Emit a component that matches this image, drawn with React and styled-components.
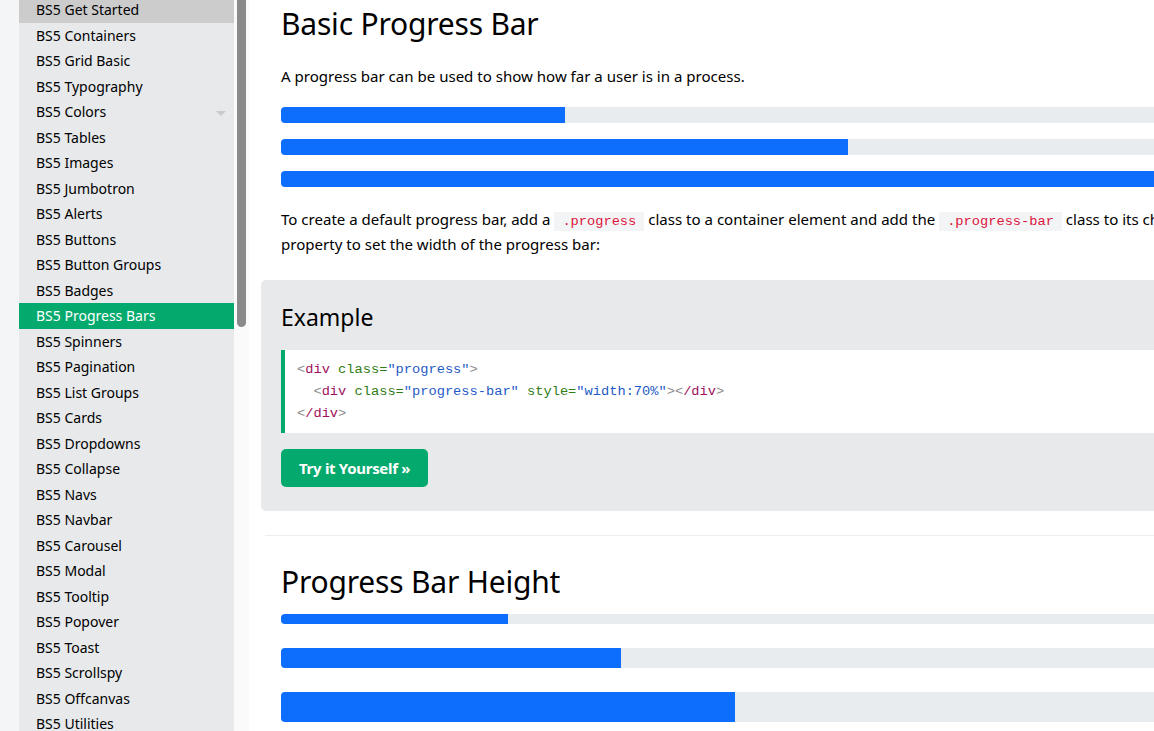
import React from "react";
import styled, { createGlobalStyle } from "styled-components";

const Global = createGlobalStyle`
  html, body { margin: 0; padding: 0; background: #fff; overflow: hidden; }
  body { font-family: "Noto Sans", "Open Sans", sans-serif; color: #000; }
  * { box-sizing: border-box; }
`;

const Page = styled.div`
  display: flex;
  width: 1154px;
  height: 731px;
  overflow: hidden;
`;

const Gutter = styled.div`
  flex: 0 0 19px;
  background: #f4f5f6;
`;

const Sidebar = styled.nav`
  flex: 0 0 215px;
  background: #e7e9eb;
  overflow: hidden;
`;

const NavList = styled.ul`
  list-style: none;
  margin: -3px 0 0;
  padding: 0;
`;

const NavItem = styled.li`
  position: relative;
  height: 25.5px;
  line-height: 25.5px;
  padding-left: 17px;
  font-size: 14px;
  white-space: nowrap;
  color: ${(p) => (p.$active ? "#fff" : "#000")};
  background: ${(p) => (p.$active ? "#04aa6d" : p.$hover ? "#cccccc" : "transparent")};
`;

const Caret = styled.span`
  position: absolute;
  right: 8px;
  top: 12px;
  width: 0;
  height: 0;
  border-left: 5px solid transparent;
  border-right: 5px solid transparent;
  border-top: 5px solid #c8cacc;
`;

const ScrollTrack = styled.div`
  flex: 0 0 15px;
  background: #fafafa;
  padding-left: 3px;
`;

const ScrollThumb = styled.div`
  width: 9px;
  height: 327px;
  background: #8a8a8a;
  border-radius: 0 0 5px 5px;
`;

const Main = styled.main`
  flex: 0 0 1174px;
  margin-left: 12px;
  padding: 0 20px;
`;

const H1 = styled.h1`
  font-size: 30px;
  font-weight: 400;
  margin: 2px 0 0;
  line-height: 44px;
  letter-spacing: -0.2px;
`;

const P = styled.p`
  font-size: 15.05px;
  line-height: 25px;
  margin: ${(p) => p.$m || "0"};
`;

const InlineCode = styled.code`
  font-family: "Liberation Mono", "DejaVu Sans Mono", monospace;
  font-size: 13.7px;
  line-height: 1;
  color: #dc143c;
  background: #f3f4f5;
  padding: 2px 8px;
`;

const Progress = styled.div`
  height: ${(p) => p.$h || 16}px;
  background: #e9ecef;
  border-radius: 4px;
  overflow: hidden;
  margin-bottom: ${(p) => p.$mb ?? 16}px;
`;

const Bar = styled.div`
  height: 100%;
  background: #0d6efd;
`;

const ExampleBox = styled.section`
  background: #e7e9eb;
  border-radius: 5px;
  margin: 23px 0 0 -20px;
  padding: 20px 20px 24px;
`;

const H2 = styled.h2`
  font-size: 23px;
  font-weight: 400;
  margin: 0 0 16px;
  line-height: 34px;
`;

const CodeBlock = styled.pre`
  margin: 0;
  background: #fff;
  border-left: 4px solid #04aa6d;
  padding: 9px 12px 8px;
  font-family: "Liberation Mono", "DejaVu Sans Mono", monospace;
  font-size: 13.7px;
  line-height: 22px;
`;

const Br = styled.span`color: #8c8c8c;`;
const Tag = styled.span`color: #a0105c;`;
const Attr = styled.span`color: #2f7d14;`;
const Val = styled.span`color: #1f5bc6;`;

const TryButton = styled.a`
  display: inline-block;
  margin-top: 16px;
  background: #04aa6d;
  color: #fff;
  font-family: "Noto Sans", sans-serif;
  font-weight: 700;
  font-size: 15px;
  line-height: 38px;
  height: 38px;
  padding: 0 18px;
  border-radius: 5px;
  letter-spacing: -0.3px;
`;

const Hr = styled.hr`
  border: 0;
  border-top: 1px solid #eeeeee;
  margin: 24px 0 0 -16px;
`;

const H1b = styled(H1)`
  margin-top: 24px;
  margin-bottom: 10px;
`;

const navItems = [
  "BS5 Get Started", "BS5 Containers", "BS5 Grid Basic", "BS5 Typography", "BS5 Colors",
  "BS5 Tables", "BS5 Images", "BS5 Jumbotron", "BS5 Alerts", "BS5 Buttons",
  "BS5 Button Groups", "BS5 Badges", "BS5 Progress Bars", "BS5 Spinners", "BS5 Pagination",
  "BS5 List Groups", "BS5 Cards", "BS5 Dropdowns", "BS5 Collapse", "BS5 Navs",
  "BS5 Navbar", "BS5 Carousel", "BS5 Modal", "BS5 Tooltip", "BS5 Popover",
  "BS5 Toast", "BS5 Scrollspy", "BS5 Offcanvas", "BS5 Utilities",
];

export default function App() {
  return (
    <>
      <Global />
      <Page>
        <Gutter />
        <Sidebar>
          <NavList>
            {navItems.map((t) => (
              <NavItem key={t} $active={t === "BS5 Progress Bars"} $hover={t === "BS5 Get Started"}>
                {t}
                {t === "BS5 Colors" && <Caret />}
              </NavItem>
            ))}
          </NavList>
        </Sidebar>
        <ScrollTrack>
          <ScrollThumb />
        </ScrollTrack>
        <Main>
          <H1>Basic Progress Bar</H1>
          <P $m="18px 0 18px">A progress bar can be used to show how far a user is in a process.</P>
          <Progress><Bar style={{ width: "25%" }} /></Progress>
          <Progress><Bar style={{ width: "50%" }} /></Progress>
          <Progress $mb={20}><Bar style={{ width: "100%" }} /></Progress>
          <P>
            To create a default progress bar, add a <InlineCode>.progress</InlineCode> class to a container element and add the{" "}
            <InlineCode>.progress-bar</InlineCode> class to its child element. Use the CSS width
          </P>
          <P>property to set the width of the progress bar:</P>
          <ExampleBox>
            <H2>Example</H2>
            <CodeBlock>
              <Br>&lt;</Br><Tag>div</Tag> <Attr>class=</Attr><Val>"progress"</Val><Br>&gt;</Br>{"\n"}
              {"  "}<Br>&lt;</Br><Tag>div</Tag> <Attr>class=</Attr><Val>"progress-bar"</Val> <Attr>style=</Attr><Val>"width:70%"</Val><Br>&gt;&lt;</Br><Tag>/div</Tag><Br>&gt;</Br>{"\n"}
              <Br>&lt;</Br><Tag>/div</Tag><Br>&gt;</Br>
            </CodeBlock>
            <TryButton>Try it Yourself »</TryButton>
          </ExampleBox>
          <Hr />
          <H1b>Progress Bar Height</H1b>
          <Progress $h={10} $mb={24}><Bar style={{ width: "20%" }} /></Progress>
          <Progress $h={20} $mb={24}><Bar style={{ width: "30%" }} /></Progress>
          <Progress $h={30}><Bar style={{ width: "40%" }} /></Progress>
        </Main>
      </Page>
    </>
  );
}
